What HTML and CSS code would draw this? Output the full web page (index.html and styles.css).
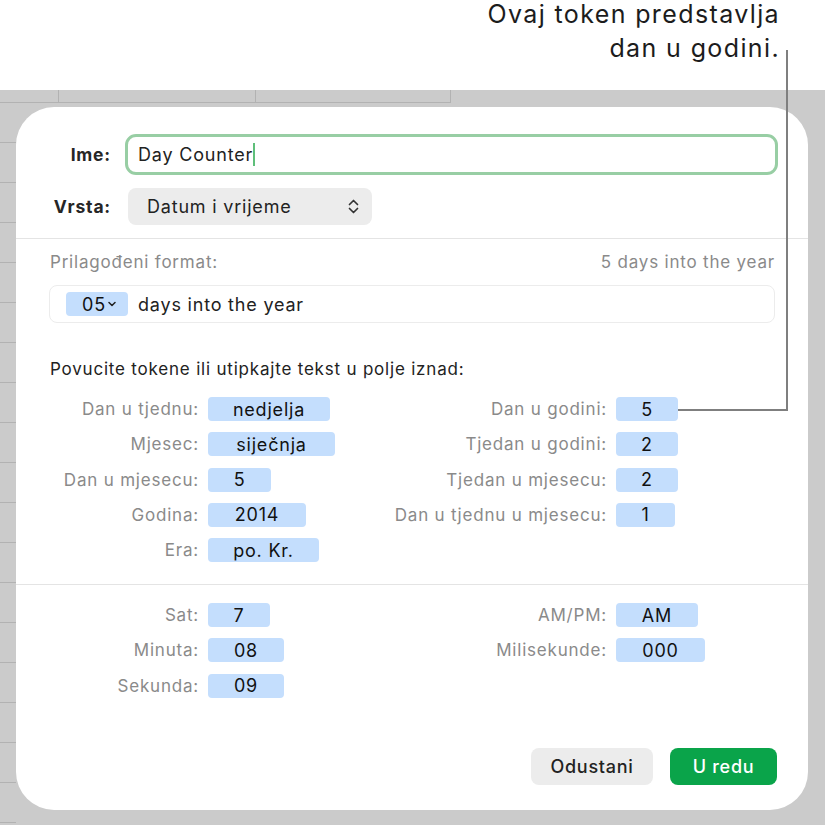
FILE: index.html
```html
<!DOCTYPE html>
<html lang="hr">
<head>
    <meta charset="UTF-8">
    <title>Prilagođeni format</title>
    <link rel="stylesheet" href="styles.css">
</head>
<body>
    <div class="note">Ovaj token predstavlja<br>dan u godini.</div>

    <div class="sheet">
        <div class="sheet-head">
            <div class="cell" style="width: 59px;"></div>
            <div class="cell" style="width: 197px;"></div>
            <div class="cell" style="width: 195px;"></div>
        </div>
        <div class="sheet-body">
            <div class="row-strip"></div>

            <div class="dialog">
                <div class="head">
                    <label class="strong">Ime:</label>
                    <div class="name-field">Day Counter<span class="caret"></span></div>
                    <label class="strong">Vrsta:</label>
                    <div class="select">
                        <span>Datum i vrijeme</span>
                        <svg width="11" height="17" viewBox="0 0 11 17">
                            <path d="M1.5 6.5 L5.5 2.5 L9.5 6.5 M1.5 10.5 L5.5 14.5 L9.5 10.5" fill="none" stroke="#333" stroke-width="1.7" stroke-linecap="round" stroke-linejoin="round"/>
                        </svg>
                    </div>
                </div>

                <div class="section">
                    <div class="format-row">
                        <span>Prilagođeni format:</span>
                        <span>5 days into the year</span>
                    </div>
                    <div class="format-field">
                        <span class="token token-pick">05
                            <svg width="8" height="6" viewBox="0 0 8 6">
                                <path d="M1 1.5 L4 4.5 L7 1.5" fill="none" stroke="#222" stroke-width="1.5" stroke-linecap="round" stroke-linejoin="round"/>
                            </svg>
                        </span>
                        <span>days into the year</span>
                    </div>

                    <p class="hint">Povucite tokene ili utipkajte tekst u polje iznad:</p>

                    <div class="tokens">
                        <span class="lbl">Dan u tjednu:</span><span class="token" style="width: 122px;">nedjelja</span>
                        <span class="lbl">Dan u godini:</span><span class="token" style="width: 62px;">5</span>

                        <span class="lbl">Mjesec:</span><span class="token" style="width: 127px;">siječnja</span>
                        <span class="lbl">Tjedan u godini:</span><span class="token" style="width: 62px;">2</span>

                        <span class="lbl">Dan u mjesecu:</span><span class="token" style="width: 63px;">5</span>
                        <span class="lbl">Tjedan u mjesecu:</span><span class="token" style="width: 62px;">2</span>

                        <span class="lbl">Godina:</span><span class="token" style="width: 98px;">2014</span>
                        <span class="lbl">Dan u tjednu u mjesecu:</span><span class="token" style="width: 59px;">1</span>

                        <span class="lbl">Era:</span><span class="token" style="width: 111px;">po. Kr.</span>
                    </div>
                </div>

                <div class="section time">
                    <div class="tokens">
                        <span class="lbl">Sat:</span><span class="token" style="width: 62px;">7</span>
                        <span class="lbl">AM/PM:</span><span class="token" style="width: 82px;">AM</span>

                        <span class="lbl">Minuta:</span><span class="token" style="width: 76px;">08</span>
                        <span class="lbl">Milisekunde:</span><span class="token" style="width: 89px;">000</span>

                        <span class="lbl">Sekunda:</span><span class="token" style="width: 76px;">09</span>
                    </div>

                    <div class="buttons">
                        <button class="btn">Odustani</button>
                        <button class="btn btn-ok">U redu</button>
                    </div>
                </div>
            </div>
        </div>
    </div>

    <!-- callout line from the note to the "Dan u godini" token -->
    <div class="callout"></div>
</body>
</html>
```

FILE: styles.css
```css
body {
    margin: 0;
    width: 825px;
    height: 827px;
    overflow: hidden;
    position: relative;
    background: #fff;
    font-family: Inter, "Noto Sans", sans-serif;
    letter-spacing: 0.05em;
    color: #1f1f1f;
}
.note {
    height: 90px;
    box-sizing: border-box;
    padding-right: 45px;
    text-align: right;
    font-size: 25px;
    line-height: 34px;
    letter-spacing: 0.055em;
    margin-top: -3px;
    margin-bottom: 3px;
    color: #1c1c1c;
}
.sheet {
    background: #cbcbcb;
    height: 735px;
    display: flex;
    flex-direction: column;
}
.sheet-head {
    display: flex;
    height: 13px;
}
.cell {
    border-right: 1px solid #b2b2b2;
    border-bottom: 1px solid #b2b2b2;
    box-sizing: border-box;
}
.sheet-body {
    display: flex;
    flex: 1;
}
.row-strip {
    width: 16px;
    background: repeating-linear-gradient(to bottom, transparent 0, transparent 39px, #b2b2b2 39px, #b2b2b2 40px);
}
.dialog {
    width: 792px;
    height: 703px;
    margin-top: 4px;
    background: #fff;
    border-radius: 38px;
    display: flex;
    flex-direction: column;
}
.head {
    display: grid;
    grid-template-columns: 95px 653px;
    column-gap: 14px;
    row-gap: 13px;
    align-items: center;
    padding: 27px 0 13px 0;
    border-bottom: 1px solid #e4e4e4;
}
.strong {
    font-size: 17.5px;
    font-weight: 700;
    text-align: right;
    color: #262626;
}
.name-field {
    height: 41px;
    box-sizing: border-box;
    border: 3px solid #98cea4;
    border-radius: 11px;
    padding-left: 10px;
    display: flex;
    align-items: center;
    font-size: 18px;
    color: #222;
}
.caret {
    display: inline-block;
    width: 2px;
    height: 23px;
    background: #5fbf7a;
}
.select {
    margin-left: 3px;
    width: 244px;
    height: 37px;
    box-sizing: border-box;
    background: #ececec;
    border-radius: 8px;
    padding: 0 13px 0 19px;
    display: flex;
    align-items: center;
    justify-content: space-between;
    font-size: 18px;
    color: #222;
}
.section {
    padding: 13px 33px 0 34px;
}
.format-row {
    display: flex;
    justify-content: space-between;
    font-size: 17px;
    line-height: 20px;
    color: #8a8a8a;
}
.format-field {
    margin: 13px 0 0 -1px;
    height: 38px;
    box-sizing: border-box;
    border: 1px solid #ececec;
    border-radius: 8px;
    padding-left: 16px;
    display: flex;
    align-items: center;
    gap: 10px;
    font-size: 18px;
    color: #222;
}
.hint {
    margin: 36px 0 0 0;
    font-size: 17px;
    line-height: 20px;
    color: #222;
}
.tokens {
    display: grid;
    grid-template-columns: 149px 150px 240px auto;
    column-gap: 9px;
    row-gap: 11.25px;
    align-items: center;
    margin-top: 18px;
    padding-bottom: 22px;
}
.lbl {
    text-align: right;
    font-size: 17px;
    color: #8a8a8a;
    white-space: nowrap;
}
.token {
    justify-self: start;
    height: 24px;
    box-sizing: border-box;
    background: #c4defd;
    border-radius: 4px;
    font-size: 18px;
    color: #111;
    display: flex;
    align-items: center;
    justify-content: center;
}
.token-pick {
    width: 62px;
    justify-content: flex-start;
    padding-left: 16px;
    gap: 2px;
}
.time {
    border-top: 1px solid #e4e4e4;
    padding-top: 0;
    flex: 1;
    display: flex;
    flex-direction: column;
    padding-right: 31px;
}
.buttons {
    margin-top: auto;
    padding-bottom: 25px;
    display: flex;
    justify-content: flex-end;
    gap: 17px;
}
.btn {
    height: 37px;
    border: none;
    border-radius: 8px;
    background: #ececec;
    font-family: Inter, "Noto Sans", sans-serif;
    font-size: 18px;
    font-weight: 500;
    letter-spacing: 0.04em;
    color: #222;
    width: 122px;
}
.btn-ok {
    width: 107px;
    background: #0aa44a;
    color: #fff;
}
.callout {
    position: absolute;
    left: 678px;
    top: 50px;
    width: 108px;
    height: 359px;
    border-right: 2px solid #7f7f7f;
    border-bottom: 2px solid #7f7f7f;
}
```
